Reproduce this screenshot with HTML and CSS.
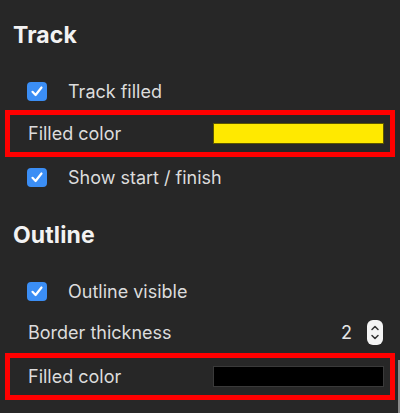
FILE: index.html
```html
<!DOCTYPE html>
<html>
<head>
<meta charset="utf-8">
<link rel="stylesheet" href="styles.css">
</head>
<body>
<div class="panel">
  <h2 class="heading heading-first">Track</h2>
  <div class="row check-row row-a">
    <span class="checkbox"><svg viewBox="0 0 20 19" width="20" height="19"><path d="M5.5 9.8 L8.6 13 L14.5 5.5" fill="none" stroke="#fff" stroke-width="2.2" stroke-linecap="round" stroke-linejoin="round"/></svg></span>
    <span class="label">Track filled</span>
  </div>
  <div class="row highlight hl-a">
    <span class="label">Filled color</span>
    <span class="swatch swatch-yellow"></span>
  </div>
  <div class="row check-row row-b">
    <span class="checkbox"><svg viewBox="0 0 20 19" width="20" height="19"><path d="M5.5 9.8 L8.6 13 L14.5 5.5" fill="none" stroke="#fff" stroke-width="2.2" stroke-linecap="round" stroke-linejoin="round"/></svg></span>
    <span class="label">Show start / finish</span>
  </div>
  <h2 class="heading heading-second">Outline</h2>
  <div class="row check-row row-c">
    <span class="checkbox"><svg viewBox="0 0 20 19" width="20" height="19"><path d="M5.5 9.8 L8.6 13 L14.5 5.5" fill="none" stroke="#fff" stroke-width="2.2" stroke-linecap="round" stroke-linejoin="round"/></svg></span>
    <span class="label">Outline visible</span>
  </div>
  <div class="row plain-row row-d">
    <span class="label">Border thickness</span>
    <span class="value">2</span>
    <span class="stepper"><svg viewBox="0 0 16 25" width="16" height="25"><path d="M5 9.5 L8 6.5 L11 9.5" fill="none" stroke="#333" stroke-width="1.5" stroke-linecap="round" stroke-linejoin="round"/><path d="M5 15.5 L8 18.5 L11 15.5" fill="none" stroke="#333" stroke-width="1.5" stroke-linecap="round" stroke-linejoin="round"/></svg></span>
  </div>
  <div class="row highlight hl-b">
    <span class="label">Filled color</span>
    <span class="swatch swatch-black"></span>
  </div>
</div>
<div class="scroll-thumb"></div>
</body>
</html>
```
FILE: styles.css
```css
html, body {
  margin: 0;
  padding: 0;
  background: #272727;
  height: 413px;
  overflow: hidden;
}
body {
  font-family: "Inter", "Noto Sans", sans-serif;
  color: #dedede;
  position: relative;
}
.panel {
  display: flex;
  flex-direction: column;
  padding: 0 5px;
}
.heading {
  margin: 0;
  height: 40px;
  display: flex;
  align-items: center;
  padding-left: 8px;
  font-size: 23px;
  font-weight: 700;
  color: #f2f2f2;
  letter-spacing: 0.1px;
}
.heading-first { margin-top: 15px; }
.heading-second { margin-top: 26px; }
.row {
  display: flex;
  align-items: center;
  box-sizing: border-box;
}
.label {
  font-size: 18px;
  color: #dcdcdc;
}
.check-row {
  height: 23px;
  padding-left: 22px;
}
.check-row .label { margin-left: 21px; }
.row-a { margin-top: 25px; }
.row-b { margin-top: 9px; }
.row-c { margin-top: 25px; }
.checkbox {
  width: 20px;
  height: 19px;
  border-radius: 4px;
  background: #3b8ef5;
  display: flex;
}
.highlight {
  height: 47px;
  border: 5px solid #ff0000;
  padding: 0 6px 0 18px;
  justify-content: space-between;
}
.hl-a { margin-top: 7px; }
.hl-b { margin-top: 6px; }
.swatch {
  width: 171px;
  height: 21px;
  box-sizing: border-box;
}
.swatch-yellow {
  background: #ffe900;
  border: 1px solid #5c5600;
}
.swatch-black {
  background: #000;
  border: 1px solid #3a3a3a;
}
.plain-row {
  height: 29px;
  padding: 0 12px 0 23px;
}
.row-d { margin-top: 15px; }
.row-d .label { flex: 1; }
.value {
  font-size: 18px;
  color: #e6e6e6;
  margin-right: 15px;
}
.stepper {
  width: 16px;
  height: 25px;
  border-radius: 6px;
  background: #f4f4f4;
  display: flex;
}
.scroll-thumb {
  position: absolute;
  right: 0;
  top: 360px;
  width: 2px;
  height: 53px;
  background: #8a8a8a;
}
```
